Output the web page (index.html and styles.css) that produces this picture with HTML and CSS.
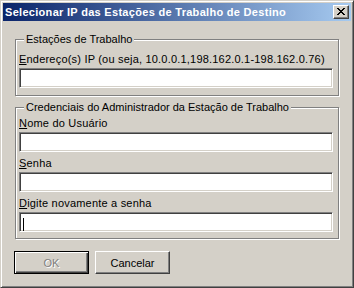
FILE: index.html
```html
<!DOCTYPE html>
<html>
<head>
    <title>Selecionar IP das Estações de Trabalho de Destino</title>
    <link rel="stylesheet" href="styles.css">
</head>
<body>
    <div class="window">
        <div class="titlebar">
            <span class="title">Selecionar IP das Estações de Trabalho de Destino</span>
            <button class="close-btn" aria-label="Fechar">
                <svg width="8" height="7" viewBox="0 0 8 7" shape-rendering="crispEdges">
                    <path d="M0 0h2v1h-2z M6 0h2v1h-2z M1 1h2v1h-2z M5 1h2v1h-2z M2 2h4v1h-4z M3 3h2v1h-2z M2 4h4v1h-4z M1 5h2v1h-2z M5 5h2v1h-2z M0 6h2v1h-2z M6 6h2v1h-2z" fill="#000"/>
                </svg>
            </button>
        </div>
        <div class="client">
            <fieldset class="group group-stations">
                <legend>Estações de Trabalho</legend>
                <label for="ips"><u>E</u>ndereço(s) IP (ou seja, 10.0.0.1,198.162.0.1-198.162.0.76)</label>
                <input type="text" id="ips" class="field">
            </fieldset>

            <fieldset class="group group-credentials">
                <legend>Credenciais do Administrador da Estação de Trabalho</legend>
                <label for="user"><u>N</u>ome do Usuário</label>
                <input type="text" id="user" class="field">
                <label for="pass"><u>S</u>enha</label>
                <input type="password" id="pass" class="field">
                <label for="pass2"><u>D</u>igite novamente a senha</label>
                <div class="field-wrap">
                    <input type="password" id="pass2" class="field">
                    <span class="caret"></span>
                </div>
            </fieldset>

            <div class="buttons">
                <button class="btn btn-default" disabled>OK</button>
                <button class="btn">Cancelar</button>
            </div>
        </div>
    </div>
</body>
</html>
```

FILE: styles.css
```css
body {
    margin: 0;
    font-family: "Liberation Sans", Arial, sans-serif;
    font-size: 11px;
    background-color: #d4d0c8;
}

.window {
    box-sizing: border-box;
    width: 354px;
    height: 288px;
    padding: 2px;
    background-color: #d4d0c8;
    border: 1px solid;
    border-color: #d4d0c8 #404040 #404040 #d4d0c8;
    box-shadow: inset 1px 1px #fff, inset -1px -1px #808080;
}

/* caption */
.titlebar {
    display: flex;
    align-items: center;
    justify-content: space-between;
    height: 18px;
    padding: 0 2px 0 2px;
    background: linear-gradient(to right, #0a246a, #a6caf0);
}

.title {
    color: #fff;
    font-weight: bold;
    font-size: 11px;
    line-height: 13px;
    letter-spacing: 0.3px;
    white-space: nowrap;
}

.close-btn {
    box-sizing: border-box;
    display: flex;
    align-items: center;
    justify-content: center;
    width: 16px;
    height: 14px;
    padding: 0;
    background-color: #d4d0c8;
    border: 1px solid;
    border-color: #fff #404040 #404040 #fff;
    box-shadow: inset -1px -1px #808080;
}

.close-btn svg {
    display: block;
    margin-left: -1px;
    margin-top: -1px;
}

/* client area */
.client {
    padding: 12px 12px 0 12px;
}

.group {
    box-sizing: border-box;
    width: 324px;
    margin: 0;
    padding: 0 3px 6px 3px;
    border: 1px solid #808080;
    box-shadow: inset 1px 1px #fff, 1px 1px #fff;
}

.group-credentials {
    margin-top: 5px;
}

legend {
    padding: 0 2px;
    margin-left: 5px;
    line-height: 13px;
    color: #000;
    background-color: #d4d0c8;
}

label {
    display: block;
    line-height: 13px;
    letter-spacing: 0.2px;
    color: #000;
    white-space: nowrap;
}

.group-stations label {
    margin-top: 7px;
}

.group-stations {
    padding-bottom: 7px;
}

.group-credentials label {
    margin-top: 5px;
}

.group-credentials label:first-of-type {
    margin-top: 3px;
}

.field {
    display: block;
    box-sizing: border-box;
    width: 314px;
    height: 20px;
    margin: 2px 0 0 0;
    padding: 0 3px;
    font: inherit;
    background-color: #fff;
    border: 1px solid;
    border-color: #808080 #fff #fff #808080;
    box-shadow: inset 1px 1px #404040, inset -1px -1px #d4d0c8;
    outline: none;
}

.field-wrap {
    position: relative;
}

.caret {
    position: absolute;
    left: 4px;
    top: 6px;
    width: 1px;
    height: 13px;
    background-color: #000;
}

/* buttons */
.buttons {
    display: flex;
    gap: 6px;
    margin: 12px 0 0 -1px;
}

.btn {
    box-sizing: border-box;
    width: 75px;
    height: 23px;
    padding: 0;
    font: inherit;
    color: #000;
    background-color: #d4d0c8;
    border: 1px solid;
    border-color: #fff #404040 #404040 #fff;
    box-shadow: inset -1px -1px #808080;
}

.btn-default {
    border: 1px solid #000;
    box-shadow: inset 1px 1px #fff, inset -1px -1px #404040, inset -2px -2px #808080;
}

.btn:disabled {
    color: #808080;
    text-shadow: 1px 1px #fff;
}
```
